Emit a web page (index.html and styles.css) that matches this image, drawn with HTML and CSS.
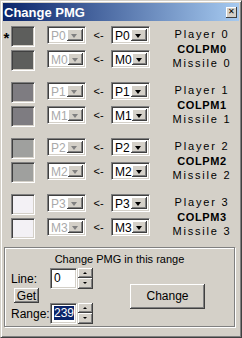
FILE: index.html
```html
<!doctype html>
<html lang="en-us">
<head>
<title>Change PMG</title>
<link rel="stylesheet" href="styles.css">
</head>
<body>
<div class="window">
    <div class="titlebar">
        <span class="title">Change PMG</span>
        <span class="close">&#x2715;</span>
    </div>
    <div class="dialog">

        <div class="group">
            <div class="rows">
                <div class="row">
                    <span class="mark">*</span><span class="swatch c0"></span>
                    <span class="combo off"><span class="val">P0</span><span class="drop"></span></span>
                    <span class="to">&lt;-</span>
                    <span class="combo"><span class="val">P0</span><span class="drop"></span></span>
                </div>
                <div class="row">
                    <span class="mark"></span><span class="swatch c0"></span>
                    <span class="combo off"><span class="val">M0</span><span class="drop"></span></span>
                    <span class="to">&lt;-</span>
                    <span class="combo"><span class="val">M0</span><span class="drop"></span></span>
                </div>
            </div>
            <div class="labels"><div>Player 0</div><div class="reg">COLPM0</div><div>Missile 0</div></div>
        </div>

        <div class="group">
            <div class="rows">
                <div class="row">
                    <span class="mark"></span><span class="swatch c1"></span>
                    <span class="combo off"><span class="val">P1</span><span class="drop"></span></span>
                    <span class="to">&lt;-</span>
                    <span class="combo"><span class="val">P1</span><span class="drop"></span></span>
                </div>
                <div class="row">
                    <span class="mark"></span><span class="swatch c1"></span>
                    <span class="combo off"><span class="val">M1</span><span class="drop"></span></span>
                    <span class="to">&lt;-</span>
                    <span class="combo"><span class="val">M1</span><span class="drop"></span></span>
                </div>
            </div>
            <div class="labels"><div>Player 1</div><div class="reg">COLPM1</div><div>Missile 1</div></div>
        </div>

        <div class="group">
            <div class="rows">
                <div class="row">
                    <span class="mark"></span><span class="swatch c2"></span>
                    <span class="combo off"><span class="val">P2</span><span class="drop"></span></span>
                    <span class="to">&lt;-</span>
                    <span class="combo"><span class="val">P2</span><span class="drop"></span></span>
                </div>
                <div class="row">
                    <span class="mark"></span><span class="swatch c2"></span>
                    <span class="combo off"><span class="val">M2</span><span class="drop"></span></span>
                    <span class="to">&lt;-</span>
                    <span class="combo"><span class="val">M2</span><span class="drop"></span></span>
                </div>
            </div>
            <div class="labels"><div>Player 2</div><div class="reg">COLPM2</div><div>Missile 2</div></div>
        </div>

        <div class="group">
            <div class="rows">
                <div class="row">
                    <span class="mark"></span><span class="swatch c3"></span>
                    <span class="combo off"><span class="val">P3</span><span class="drop"></span></span>
                    <span class="to">&lt;-</span>
                    <span class="combo"><span class="val">P3</span><span class="drop"></span></span>
                </div>
                <div class="row">
                    <span class="mark"></span><span class="swatch c3"></span>
                    <span class="combo off"><span class="val">M3</span><span class="drop"></span></span>
                    <span class="to">&lt;-</span>
                    <span class="combo"><span class="val">M3</span><span class="drop"></span></span>
                </div>
            </div>
            <div class="labels"><div>Player 3</div><div class="reg">COLPM3</div><div>Missile 3</div></div>
        </div>

        <div class="range">
            <div class="range-title">Change PMG in this range</div>
            <div class="range-body">
                <div class="fields">
                    <div class="field">
                        <label class="lbl">Line:</label>
                        <span class="edit">0</span>
                        <span class="spin"><span class="up"></span><span class="down"></span></span>
                    </div>
                    <button class="btn get">Get</button>
                    <div class="field">
                        <label class="lbl">Range:</label>
                        <span class="edit"><span class="sel">239</span></span>
                        <span class="spin"><span class="up"></span><span class="down"></span></span>
                    </div>
                </div>
                <button class="btn change">Change</button>
            </div>
        </div>

    </div>
</div>
</body>
</html>
```

FILE: styles.css
```css
BODY {
    margin: 0;
    padding: 0;
    font: 11px "Liberation Sans", Arial, sans-serif;
    color: #000;
    background: #d4d0c8;
}
.window {
    width: 242px;
    height: 338px;
    box-sizing: border-box;
    padding: 1px;
    background: #d4d0c8;
    border: 1px solid;
    border-color: #d4d0c8 #404040 #404040 #d4d0c8;
    box-shadow: inset 1px 1px #fff, inset -1px -1px #808080;
}
.titlebar {
    height: 18px;
    margin: 1px 1px 0 1px;
    display: flex;
    align-items: center;
    justify-content: space-between;
    padding: 0 2px 0 1px;
    background: linear-gradient(to right, #0a246a, #a6caf0);
}
.title {
    color: #fff;
    font: bold 13px "Liberation Sans", Arial, sans-serif;
}
.close {
    width: 11px;
    height: 11px;
    box-sizing: border-box;
    background: #d4d0c8;
    font-size: 8px;
    line-height: 10px;
    text-align: center;
    box-shadow: inset -1px -1px #404040, inset 1px 1px #fff;
}
.dialog {
    display: flex;
    flex-direction: column;
    padding: 5px 0 0 0;
}

/* colour rows */
.group {
    display: flex;
    height: 45px;
}
.group + .group {
    margin-top: 11px;
}
.rows {
    display: flex;
    flex-direction: column;
    gap: 3px;
}
.row {
    display: flex;
    align-items: flex-start;
    height: 21px;
}
.mark {
    width: 9px;
    font: bold 15px "Liberation Sans", Arial, sans-serif;
    line-height: 24px;
    text-align: center;
}
.swatch {
    width: 24px;
    height: 21px;
    box-sizing: border-box;
    border: 1px solid;
    border-color: #808080 #fff #fff #808080;
    box-shadow: inset 1px 1px #404040, inset -1px -1px #d4d0c8;
}
.c0 { background: #5d5e5c; }
.c1 { background: #7e7c81; }
.c2 { background: #9fa09e; }
.c3 { background: #f3f1f5; }

.combo {
    display: flex;
    width: 39px;
    height: 18px;
    box-sizing: border-box;
    margin-left: 12px;
    background: #fff;
    border: 1px solid;
    border-color: #808080 #fff #fff #808080;
    box-shadow: inset 1px 1px #404040, inset -1px -1px #d4d0c8;
    padding: 2px;
}
.combo + .to + .combo {
    margin-left: 0;
}
.val {
    flex: 1;
    font-size: 12px;
    line-height: 14px;
    padding-left: 1px;
}
.drop {
    width: 16px;
    position: relative;
    background: #d4d0c8;
    box-shadow: inset -1px -1px #404040, inset 1px 1px #fff, inset -2px -2px #808080;
}
.drop:after {
    content: "";
    position: absolute;
    left: 4px;
    top: 5px;
    border: 3.5px solid transparent;
    border-top: 4px solid #000;
    border-bottom: 0;
}
.off .val {
    color: #a9a9a9;
}
.off .drop:after {
    border-top-color: #808080;
}
.to {
    width: 25px;
    text-align: center;
    font-size: 11px;
    line-height: 18px;
}
.labels {
    flex: 1;
    display: flex;
    flex-direction: column;
    align-items: center;
    justify-content: center;
    padding: 1px 0 0 14px;
    line-height: 14.5px;
    font-size: 11px;
    letter-spacing: 1.8px;
}
.labels .reg {
    font-weight: bold;
    letter-spacing: 0.6px;
}

/* range box */
.range {
    margin: 8px 5px 0 2px;
    height: 80px;
    box-sizing: border-box;
    border: 1px solid #808080;
    box-shadow: inset 1px 1px #fff, 1px 1px #fff;
    padding: 4px 0 0 6px;
}
.range-title {
    text-align: center;
    font-size: 11px;
    line-height: 14px;
    padding-right: 6px;
}
.range-body {
    display: flex;
    align-items: center;
    margin-top: 2px;
}
.fields {
    display: flex;
    flex-direction: column;
}
.field {
    display: flex;
    align-items: center;
    height: 21px;
}
.lbl {
    width: 39px;
    font-size: 12px;
}
.edit {
    width: 27px;
    height: 21px;
    box-sizing: border-box;
    background: #fff;
    border: 1px solid;
    border-color: #808080 #fff #fff #808080;
    box-shadow: inset 1px 1px #404040, inset -1px -1px #d4d0c8;
    padding: 2px 2px 0 3px;
    font-size: 12px;
    line-height: 15px;
    overflow: hidden;
    white-space: nowrap;
}
.sel {
    background: #0a246a;
    color: #fff;
}
.spin {
    display: flex;
    flex-direction: column;
    margin-left: 1px;
}
.spin span {
    width: 15px;
    height: 10px;
    position: relative;
    background: #d4d0c8;
    box-shadow: inset -1px -1px #404040, inset 1px 1px #fff, inset -2px -2px #808080;
}
.spin .down {
    height: 11px;
}
.spin span:after {
    content: "";
    position: absolute;
    left: 5px;
    top: 4px;
    border: 2px solid transparent;
}
.spin .up:after {
    border-bottom: 2px solid #000;
    border-top: 0;
}
.spin .down:after {
    border-top: 2px solid #000;
    border-bottom: 0;
}
.btn {
    font: 12px "Liberation Sans", Arial, sans-serif;
    color: #000;
    background: #d4d0c8;
    border: 0;
    padding: 0;
    box-shadow: inset -1px -1px #404040, inset 1px 1px #fff, inset -2px -2px #808080;
}
.get {
    width: 25px;
    height: 15px;
    margin: -1px 0 0 3px;
    line-height: 14px;
}
.change {
    width: 75px;
    height: 25px;
    margin-left: 37px;
}
```
